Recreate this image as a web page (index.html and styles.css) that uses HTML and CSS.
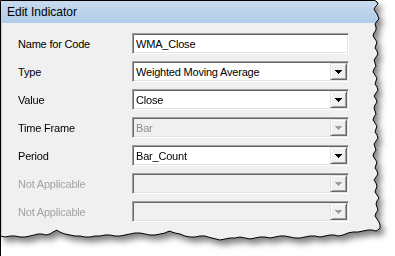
FILE: index.html
```html
<!DOCTYPE html>
<html>
<head>
<meta charset="utf-8">
<link rel="stylesheet" href="styles.css">
</head>
<body>
<div class="shot">
  <div class="shadow-wrap">
    <div class="dialog">
      <div class="titlebar">Edit Indicator</div>
      <div class="client">
        <div class="form">
          <label class="lbl">Name for Code</label>
          <div class="field input"><span class="val">WMA_Close</span></div>

          <label class="lbl">Type</label>
          <div class="field combo"><span class="val">Weighted Moving Average</span><span class="btn"><svg width="7" height="4" viewBox="0 0 7 4"><polygon points="0,0 7,0 3.5,4" fill="#000"/></svg></span></div>

          <label class="lbl">Value</label>
          <div class="field combo"><span class="val">Close</span><span class="btn"><svg width="7" height="4" viewBox="0 0 7 4"><polygon points="0,0 7,0 3.5,4" fill="#000"/></svg></span></div>

          <label class="lbl">Time Frame</label>
          <div class="field combo disabled"><span class="val">Bar</span><span class="btn"><svg width="7" height="4" viewBox="0 0 7 4"><polygon points="0,0 7,0 3.5,4" fill="#a0a0a0"/></svg></span></div>

          <label class="lbl">Period</label>
          <div class="field combo"><span class="val">Bar_Count</span><span class="btn"><svg width="7" height="4" viewBox="0 0 7 4"><polygon points="0,0 7,0 3.5,4" fill="#000"/></svg></span></div>

          <label class="lbl off">Not Applicable</label>
          <div class="field combo disabled"><span class="val"></span><span class="btn"><svg width="7" height="4" viewBox="0 0 7 4"><polygon points="0,0 7,0 3.5,4" fill="#a0a0a0"/></svg></span></div>

          <label class="lbl off">Not Applicable</label>
          <div class="field combo disabled"><span class="val"></span><span class="btn"><svg width="7" height="4" viewBox="0 0 7 4"><polygon points="0,0 7,0 3.5,4" fill="#a0a0a0"/></svg></span></div>
        </div>
      </div>
    </div>
  </div>
  <svg class="outline" width="395" height="256" viewBox="0 0 395 256">
    <defs>
      <polygon id="tornShape" points="0.5,256 0.5,0.5 375,0.5 377,2 378,4 376,6 374,9 375,11 377,14 378,16 379,19 377,21 375,24 376,27 376,30 374,33 373,36 375,39 377,42 376,45 375,48 377,51 378,54 376,57 374,60 375,63 376,66 374,69 373,72 375,75 377,78 376,81 375,84 377,87 378,90 376,93 374,96 376,99 377,102 375,105 374,108 375,111 376,114 374,117 373,120 375,123 377,126 376,129 375,132 377,135 378,138 376,141 374,144 375,147 376,150 374,153 373,156 375,159 377,162 376,165 375,168 377,171 378,174 376,177 374,180 376,183 377,186 376,189 375,192 377,195 379,198 377,201 376,204 377,207 378,210 376,213 375,216 377,219 379,222 380,225 380,228 378,230 376,231 372,230 368,230 363,231 358,232 353,232 348,233 343,235 338,236 334,235 330,235 325,236 320,237 315,236 310,236 305,237 300,238 295,238 290,237 285,236 280,236 275,237 270,238 265,237 260,237 255,238 250,239 245,238 240,237 235,238 230,238 225,239 220,240 216,239 212,238 208,237 205,236 200,236 195,237 190,237 185,236 180,234 175,233 172,232 170,231 167,232 165,233 160,234 155,235 150,235 145,234 140,233 135,233 130,234 125,235 120,236 115,236 110,235 105,235 100,236 95,236 90,237 85,237 80,236 75,236 70,235 65,234 62,233 60,232 58,231 57,230 55,231 53,232 50,234 46,235 42,234 38,234 34,235 30,236 25,237 20,237 15,236 10,236 5,237 0.5,236"/>
      <clipPath id="torn" clipPathUnits="userSpaceOnUse">
        <use href="#tornShape"/>
      </clipPath>
    </defs>
    <use href="#tornShape" fill="none" stroke="#000" stroke-width="1"/>
  </svg>
</div>
</body>
</html>
```
FILE: styles.css
```css
html, body {
  margin: 0;
  padding: 0;
  background: #ffffff;
}
.shot {
  position: relative;
  width: 395px;
  height: 256px;
  overflow: hidden;
}
.shadow-wrap {
  width: 395px;
  height: 256px;
  filter: drop-shadow(4px 5px 3px rgba(0, 0, 0, 0.5));
}
.dialog {
  width: 385px;
  height: 245px;
  background: #f0f0f0;
  display: flex;
  flex-direction: column;
  clip-path: url(#torn);
}
.titlebar {
  height: 23px;
  box-sizing: border-box;
  padding: 5px 0 0 7px;
  background: linear-gradient(#c9dcf0, #b0cbe8);
  font-family: "Liberation Sans", Arial, sans-serif;
  font-size: 12px;
  line-height: 14px;
  color: #000;
  flex: none;
}
.client {
  flex: 1;
  border-left: 2px solid #b8d0ea;
}
.form {
  display: grid;
  grid-template-columns: 114px 217px;
  grid-auto-rows: 21px;
  row-gap: 7px;
  padding: 10px 0 0 16px;
  font-family: "Liberation Sans", Arial, sans-serif;
  font-size: 11px;
  letter-spacing: -0.2px;
}
.lbl {
  display: flex;
  align-items: center;
  color: #000;
}
.lbl.off {
  color: #a3a3a3;
}
.field {
  box-sizing: border-box;
  height: 21px;
  display: flex;
  align-items: center;
  background: #fff;
  border: 1px solid;
  border-color: #a0a0a0 #ffffff #ffffff #a0a0a0;
  box-shadow: inset 1px 1px 0 #696969, inset -1px -1px 0 #e3e3e3;
  padding: 1px 1px 1px 3px;
  color: #000;
}
.field .val {
  flex: 1;
}
.field.disabled {
  background: #f0f0f0;
  color: #8c8c8c;
}
.btn {
  box-sizing: border-box;
  width: 17px;
  height: 17px;
  flex: none;
  display: flex;
  align-items: center;
  justify-content: center;
  background: #f0f0f0;
  border: 1px solid;
  border-color: #e3e3e3 #696969 #696969 #e3e3e3;
  box-shadow: inset 1px 1px 0 #ffffff, inset -1px -1px 0 #a0a0a0;
}
.btn svg {
  display: block;
  shape-rendering: crispEdges;
}
.outline {
  position: absolute;
  left: 0;
  top: 0;
}
```
